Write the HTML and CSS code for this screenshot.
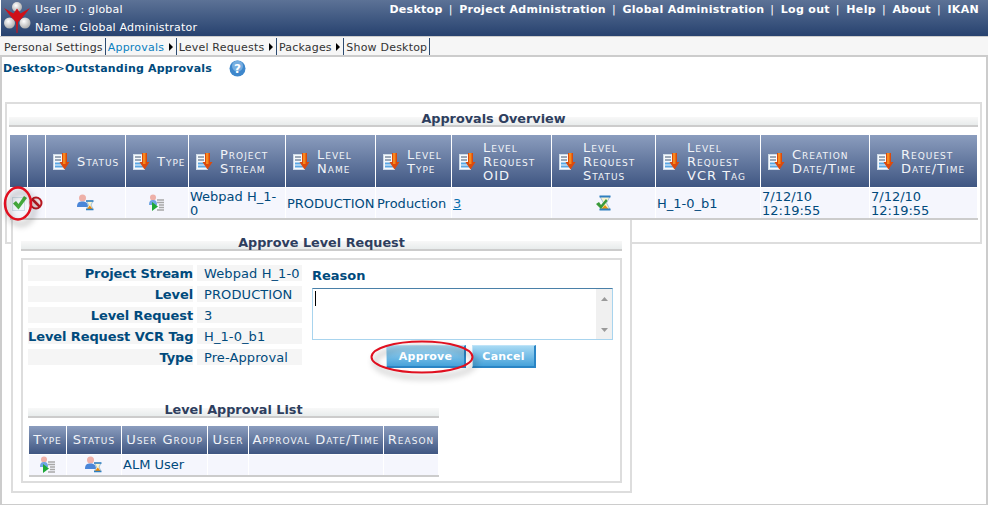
FILE: index.html
```html
<!DOCTYPE html>
<html lang="en">
<head>
    <meta charset="UTF-8">
    <title>Approvals Overview</title>
    <link rel="stylesheet" href="styles.css">
</head>
<body>
    <svg class="icon-defs" width="0" height="0">
        <defs>
            <radialGradient id="ball" cx="0.4" cy="0.35" r="0.7">
                <stop offset="0" stop-color="#fff"/>
                <stop offset="1" stop-color="#a8a8a8"/>
            </radialGradient>
            <g id="sort-icon">
                <rect x="0.5" y="1.500" width="11" height="15" fill="#f6f9fc" stroke="#cddae6"/>
                <path d="M2 4h6M2 7h6" stroke="#9aa8b8" stroke-width="2"/>
                <path d="M2 10.500h7M2 13.500h8" stroke="#5aa8e4" stroke-width="2"/>
                <path d="M9 0h5v9h2.500l-5 7.500-5-7.500H9z" fill="#dc4a0c"/>
                <path d="M10 0h2.500v11H10z" fill="#f58a1f"/>
            </g>
            <g id="status-icon">
                <circle cx="5.500" cy="4" r="3.500" fill="#eeb0a8"/>
                <path d="M0 13c0-4.500 2-5.500 5.500-5.500S11 9 11 13z" fill="#4a86d8"/>
                <path d="M9.500 7h6.500l-2 4 2 4H9.500l2-4z" fill="#faf4d0" stroke="#6aa0cc" stroke-width="0.600"/>
                <path d="M10 15h5.500l-2.700-3.500z" fill="#e8860c"/>
                <path d="M9 7h7.500M9 15.500h7.500" stroke="#2f7fc0" stroke-width="1.500"/>
            </g>
            <g id="type-icon">
                <circle cx="5" cy="3.500" r="3" fill="#eeb0a8"/>
                <path d="M1 11c0-4 1.500-5 4-5s4 1 4 5z" fill="#6ea4e4"/>
                <path d="M4 8l6 4.500L4 17z" fill="#1ea838"/>
                <path d="M9 6h7M9 8.500h7M11 11h5M11 13.500h5M9 16h7" stroke="#a8a8a8" stroke-width="1.600"/>
            </g>
        </defs>
    </svg>

    <header class="top-bar">
        <div class="user-box">
            <svg class="logo" width="30" height="33" viewBox="0 0 30 33">
                <circle cx="13" cy="5" r="5" fill="url(#ball)"/>
                <circle cx="5.500" cy="21" r="5.500" fill="url(#ball)"/>
                <circle cx="21" cy="21" r="5.500" fill="url(#ball)"/>
                <path d="M0 6L9.500 11.500 13 6.500 16.500 11.500 26 6 18 16 14 20 13.500 31 12.500 31 12 20 8 16z" fill="#d01018"/>
            </svg>
            <div class="user-info">
                <div>User ID : global</div>
                <div>Name : Global Administrator</div>
            </div>
        </div>
        <nav class="top-links">
            <a href="#">Desktop</a><span>|</span>
            <a href="#">Project Administration</a><span>|</span>
            <a href="#">Global Administration</a><span>|</span>
            <a href="#">Log out</a><span>|</span>
            <a href="#">Help</a><span>|</span>
            <a href="#">About</a><span>|</span>
            <a href="#">IKAN</a>
        </nav>
    </header>

    <nav class="menu-bar">
        <a href="#">Personal Settings</a>
        <a href="#" class="active has-sub">Approvals</a>
        <a href="#" class="has-sub">Level Requests</a>
        <a href="#" class="has-sub">Packages</a>
        <a href="#">Show Desktop</a>
    </nav>

    <main class="content">
        <div class="crumbs">
            <span>Desktop<i>&gt;</i>Outstanding Approvals</span>
            <svg class="help" width="17" height="17" viewBox="0 0 17 17">
                <circle cx="8.500" cy="8.500" r="8" fill="#3d87cc"/>
                <circle cx="8.500" cy="6" r="5.500" fill="#76aee0"/>
                <text x="8.500" y="13" text-anchor="middle" class="help-mark">?</text>
            </svg>
        </div>

        <section class="panel overview">
            <h2 class="bar-title"><span>Approvals Overview</span></h2>
            <table class="grid main-grid">
                <colgroup>
                    <col class="w-18"><col class="w-18"><col class="w-80"><col class="w-63"><col class="w-97"><col class="w-90">
                    <col class="w-76"><col class="w-100"><col class="w-104"><col class="w-105"><col class="w-109"><col class="w-108">
                </colgroup>
                <thead>
                    <tr>
                        <th></th>
                        <th></th>
                        <th><div class="sort"><svg width="17" height="18"><use href="#sort-icon"/></svg><span>Status</span></div></th>
                        <th><div class="sort"><svg width="17" height="18"><use href="#sort-icon"/></svg><span>Type</span></div></th>
                        <th><div class="sort"><svg width="17" height="18"><use href="#sort-icon"/></svg><span>Project<br>Stream</span></div></th>
                        <th><div class="sort"><svg width="17" height="18"><use href="#sort-icon"/></svg><span>Level<br>Name</span></div></th>
                        <th><div class="sort"><svg width="17" height="18"><use href="#sort-icon"/></svg><span>Level<br>Type</span></div></th>
                        <th><div class="sort"><svg width="17" height="18"><use href="#sort-icon"/></svg><span>Level<br>Request<br>OID</span></div></th>
                        <th><div class="sort"><svg width="17" height="18"><use href="#sort-icon"/></svg><span>Level<br>Request<br>Status</span></div></th>
                        <th><div class="sort"><svg width="17" height="18"><use href="#sort-icon"/></svg><span>Level<br>Request<br>VCR Tag</span></div></th>
                        <th><div class="sort"><svg width="17" height="18"><use href="#sort-icon"/></svg><span>Creation<br>Date/Time</span></div></th>
                        <th><div class="sort"><svg width="17" height="18"><use href="#sort-icon"/></svg><span>Request<br>Date/Time</span></div></th>
                    </tr>
                </thead>
                <tbody>
                    <tr>
                        <td class="center">
                            <svg width="17" height="17" viewBox="0 0 17 17">
                                <rect x="1.500" y="2.500" width="12" height="13" fill="#f0f5f9" stroke="#cfdde8"/>
                                <path d="M2 8.500l3-2.500 2.500 3L13 1l3 2-8.500 11.500z" fill="#44a83c"/>
                            </svg>
                        </td>
                        <td class="center no-icon">
                            <svg width="14" height="14" viewBox="0 0 14 14">
                                <circle cx="7" cy="7" r="5.500" fill="#f0dede" stroke="#b81820" stroke-width="2"/>
                                <path d="M3 3l8 8" stroke="#b81820" stroke-width="2.500"/>
                            </svg>
                        </td>
                        <td class="center"><svg width="17" height="18"><use href="#status-icon"/></svg></td>
                        <td class="center"><svg width="17" height="18"><use href="#type-icon"/></svg></td>
                        <td>Webpad H_1-0</td>
                        <td>PRODUCTION</td>
                        <td>Production</td>
                        <td><a href="#">3</a></td>
                        <td class="center">
                            <svg width="17" height="17" viewBox="0 0 17 17">
                                <path d="M5 1.500h10l-3.500 6.500 3.500 6.500H5l3.500-6.500z" fill="#faf4d0" stroke="#6aa0cc" stroke-width="0.600"/>
                                <path d="M6 14.500h8l-4-4.500z" fill="#e8960c"/>
                                <path d="M4.500 1.500h11M4.500 14.500h11" stroke="#2f7fc0" stroke-width="2"/>
                                <path d="M1 9l3-2 2 3 5-6 1.500 2-6.500 8z" fill="#3a9a3a"/>
                            </svg>
                        </td>
                        <td>H_1-0_b1</td>
                        <td>7/12/10<br>12:19:55</td>
                        <td>7/12/10<br>12:19:55</td>
                    </tr>
                </tbody>
            </table>
        </section>

        <section class="dialog">
            <h2 class="bar-title"><span>Approve Level Request</span></h2>
            <div class="dialog-body">
                <div class="form-top">
                    <dl class="fields">
                        <dt>Project Stream</dt><dd>Webpad H_1-0</dd>
                        <dt>Level</dt><dd>PRODUCTION</dd>
                        <dt>Level Request</dt><dd>3</dd>
                        <dt>Level Request VCR Tag</dt><dd>H_1-0_b1</dd>
                        <dt>Type</dt><dd>Pre-Approval</dd>
                    </dl>
                    <div class="reason">
                        <label class="reason-label">Reason</label>
                        <div class="fake-textarea">
                            <span class="caret"></span>
                            <div class="scroll">
                                <svg width="9" height="5"><path d="M1 5l3.500-4L8 5z" fill="#9a9a9a"/></svg>
                                <svg width="9" height="5"><path d="M1 0l3.500 4L8 0z" fill="#9a9a9a"/></svg>
                            </div>
                        </div>
                        <div class="buttons">
                            <button class="btn btn-approve">Approve</button>
                            <button class="btn btn-cancel">Cancel</button>
                        </div>
                    </div>
                </div>

                <div class="approval-list">
                    <h2 class="bar-title"><span>Level Approval List</span></h2>
                    <table class="grid list-grid">
                        <colgroup>
                            <col class="w-38"><col class="w-55"><col class="w-86"><col class="w-41"><col class="w-135"><col class="w-55">
                        </colgroup>
                        <thead>
                            <tr>
                                <th>Type</th>
                                <th>Status</th>
                                <th>User Group</th>
                                <th>User</th>
                                <th>Approval Date/Time</th>
                                <th>Reason</th>
                            </tr>
                        </thead>
                        <tbody>
                            <tr>
                                <td class="center"><svg width="17" height="18"><use href="#type-icon"/></svg></td>
                                <td class="center"><svg width="17" height="18"><use href="#status-icon"/></svg></td>
                                <td>ALM User</td>
                                <td></td>
                                <td></td>
                                <td></td>
                            </tr>
                        </tbody>
                    </table>
                </div>
            </div>
        </section>

        <svg class="callout callout-check" width="44" height="52" viewBox="0 0 44 52">
            <ellipse cx="16" cy="23.500" rx="13" ry="16" fill="none" stroke="#e01020" stroke-width="2.500"/>
        </svg>
        <svg class="callout callout-approve" width="120" height="48" viewBox="0 0 120 48">
            <ellipse cx="54" cy="18" rx="50.500" ry="15.500" fill="none" stroke="#e01020" stroke-width="2"/>
        </svg>
    </main>
</body>
</html>
```

FILE: styles.css
```css
* {
    box-sizing: border-box;
}

body {
    margin: 0;
    background-color: #fff;
    font-family: 'DejaVu Sans', Verdana, sans-serif;
    font-size: 13px;
    color: #004a7c;
    height: 505px;
    overflow: hidden;
}

a {
    text-decoration: none;
    color: inherit;
}

.icon-defs {
    position: absolute;
}

.top-bar {
    height: 36px;
    margin-left: 1px;
    background: linear-gradient(#5c7296, #27426f);
    display: flex;
    justify-content: space-between;
    color: #fff;
    font-size: 11px;
}

.user-box {
    display: flex;
    gap: 1px;
    padding: 2px 0 0 3px;
    letter-spacing: 0.2px;
}

.user-info {
    line-height: 18px;
    margin-top: -1px;
}

.top-links {
    display: flex;
    padding: 1px 9px 0 0;
    font-weight: bold;
    line-height: 17px;
    letter-spacing: 0.3px;
}

.top-links span {
    font-weight: normal;
    margin: 0 6.5px 0 6px;
}

.menu-bar {
    height: 21px;
    background-color: #f6f6f6;
    border-top: 1px solid #ccc;
    border-bottom: 2px solid #ccc;
    display: flex;
    padding: 1px 0 0 4px;
    font-size: 11px;
    line-height: 20px;
    letter-spacing: 0.2px;
    color: #333;
}

.menu-bar a {
    border-right: 1px solid #2c4a70;
    padding-right: 2px;
    margin-right: 2px;
    height: 17px;
}

.menu-bar a.active {
    color: #0a80c0;
}

.menu-bar a.has-sub::after {
    content: "";
    display: inline-block;
    margin: 0 1px 0 4.5px;
    border-left: 4px solid #000;
    border-top: 4px solid transparent;
    border-bottom: 4px solid transparent;
}

.content {
    position: relative;
    height: 448px;
    border-left: 2px solid #ccc;
    border-right: 2px solid #ccc;
    border-bottom: 1px solid #ccc;
}

.crumbs {
    display: flex;
    align-items: center;
    gap: 17px;
    height: 22px;
    padding-left: 1px;
    font-size: 11px;
    font-weight: bold;
    letter-spacing: 0.2px;
}

.crumbs i {
    font-style: normal;
    font-weight: normal;
}

.help-mark {
    fill: #fff;
    font-family: 'DejaVu Sans', sans-serif;
    font-size: 12px;
    font-weight: bold;
}

.panel {
    margin: 23px 4px 0 3px;
    height: 142px;
    border: 2px solid #ddd;
    padding: 13px 2px 0 2px;
}

.bar-title {
    margin: 0;
    height: 10px;
    background: linear-gradient(#f8f8f8, #e8ecec);
    border-bottom: 2px solid #ccc;
    text-align: center;
    font-size: 12.8px;
    line-height: 3px;
    color: #2e3e5e;
}

.grid {
    table-layout: fixed;
    border-collapse: separate;
    border-spacing: 0;
}

.main-grid {
    width: 968px;
    margin: 8px 0 0 1px;
    border-bottom: 2px solid #ccc;
}

.w-18 { width: 18px; }
.w-38 { width: 38px; }
.w-41 { width: 41px; }
.w-55 { width: 55px; }
.w-63 { width: 63px; }
.w-76 { width: 76px; }
.w-80 { width: 80px; }
.w-86 { width: 86px; }
.w-90 { width: 90px; }
.w-97 { width: 97px; }
.w-100 { width: 100px; }
.w-104 { width: 104px; }
.w-105 { width: 105px; }
.w-108 { width: 108px; }
.w-109 { width: 109px; }
.w-135 { width: 135px; }

.grid th {
    background: linear-gradient(#8b9dbe, #3f5682);
    border-right: 1px solid #fff;
    color: #f2f4f8;
    font-weight: normal;
    font-variant: small-caps;
    font-size: 13px;
    letter-spacing: 1px;
    line-height: 14px;
    text-align: left;
    padding: 0;
}

.main-grid th {
    height: 52px;
}

.sort {
    display: flex;
    align-items: center;
    gap: 7px;
    padding: 1px 0 0 7px;
}

.grid td {
    background-color: #f5f6fd;
    border-right: 1px solid #fff;
    border-top: 1px solid #fff;
    padding: 2px 2px 0 1px;
    line-height: 14px;
}

.main-grid td {
    height: 31px;
}

.grid td a {
    text-decoration: underline;
    color: #0a70b0;
}

.grid td.center {
    text-align: center;
    padding-top: 0;
}

.grid td svg {
    display: inline-block;
    vertical-align: middle;
}

.dialog {
    position: absolute;
    left: 9px;
    top: 163px;
    width: 621px;
    height: 273px;
    background-color: #fff;
    border: 2px solid #ddd;
    border-top: none;
    padding: 21px 8px 0 8px;
}

.dialog-body {
    margin-top: 7px;
    height: 225px;
    border: 2px solid #ddd;
    padding: 5px 7px 0 5px;
}

.form-top {
    display: flex;
    gap: 10px;
}

.fields {
    margin: 0;
    display: grid;
    grid-template-columns: 165px 105px;
    column-gap: 4px;
    row-gap: 5px;
    grid-auto-rows: 16px;
    line-height: 18px;
    width: 274px;
}

.fields dt {
    background-color: #f5f5f5;
    font-weight: bold;
    text-align: right;
    white-space: nowrap;
    letter-spacing: -0.1px;
}

.fields dd {
    margin: 0;
    background-color: #f5f5f5;
    padding-left: 7px;
    white-space: nowrap;
    letter-spacing: 0.1px;
}

.reason {
    width: 301px;
    margin-top: 2px;
}

.reason-label {
    display: block;
    font-weight: bold;
    height: 16px;
    line-height: 18px;
}

.fake-textarea {
    margin-top: 5px;
    height: 52px;
    display: flex;
    justify-content: space-between;
    border: 1px solid #a8d4ee;
    border-top-color: #4a80a8;
}

.caret {
    margin: 2px 0 0 2px;
    width: 1px;
    height: 15px;
    background-color: #000;
}

.scroll {
    width: 16px;
    background-color: #f0f0f0;
    display: flex;
    flex-direction: column;
    align-items: center;
    justify-content: space-between;
    padding: 7px 0 6px;
}

.buttons {
    display: flex;
    gap: 6px;
    margin: 5px 0 0 74px;
}

.btn {
    height: 23px;
    padding: 0;
    border: 1px solid #bfe4f8;
    border-right: 2px solid #2a85c5;
    border-bottom: 2px solid #2a85c5;
    background: linear-gradient(#a8daf4, #46a2da);
    color: #fff;
    font-family: inherit;
    font-size: 11px;
    letter-spacing: 0.2px;
    font-weight: bold;
}

.btn-approve {
    width: 80px;
}

.btn-cancel {
    width: 64px;
}

.approval-list {
    margin-top: 40px;
    width: 411px;
}

.list-grid {
    margin: 8px 0 0 1px;
    width: 410px;
    border-bottom: 2px solid #ccc;
}

.list-grid th {
    height: 28px;
    text-align: center;
}

.list-grid td {
    height: 21px;
    padding-top: 0;
}

.callout {
    position: absolute;
    overflow: visible;
    filter: drop-shadow(3px 5px 3px rgba(0, 0, 0, 0.4));
}

.callout-check {
    left: 0;
    top: 123px;
}

.callout-approve {
    left: 366px;
    top: 282px;
}
```
